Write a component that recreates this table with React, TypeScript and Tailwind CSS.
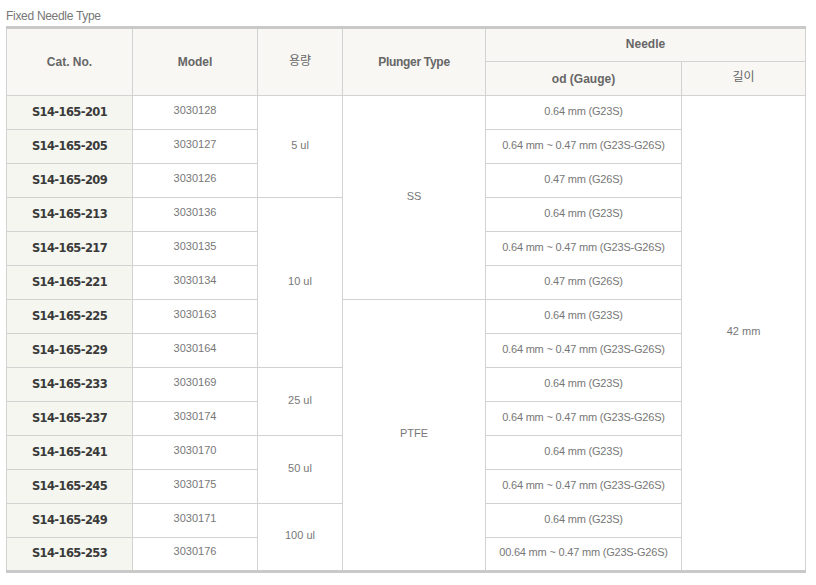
import React from "react";

type Row = {
  cat: string;
  model: string;
  od: string;
  vol?: { text: string; span: number };
  plunger?: { text: string; span: number };
};

const rows: Row[] = [
  { cat: "S14-165-201", model: "3030128", od: "0.64 mm (G23S)", vol: { text: "5 ul", span: 3 }, plunger: { text: "SS", span: 6 } },
  { cat: "S14-165-205", model: "3030127", od: "0.64 mm ~ 0.47 mm (G23S-G26S)" },
  { cat: "S14-165-209", model: "3030126", od: "0.47 mm (G26S)" },
  { cat: "S14-165-213", model: "3030136", od: "0.64 mm (G23S)", vol: { text: "10 ul", span: 5 } },
  { cat: "S14-165-217", model: "3030135", od: "0.64 mm ~ 0.47 mm (G23S-G26S)" },
  { cat: "S14-165-221", model: "3030134", od: "0.47 mm (G26S)" },
  { cat: "S14-165-225", model: "3030163", od: "0.64 mm (G23S)", plunger: { text: "PTFE", span: 8 } },
  { cat: "S14-165-229", model: "3030164", od: "0.64 mm ~ 0.47 mm (G23S-G26S)" },
  { cat: "S14-165-233", model: "3030169", od: "0.64 mm (G23S)", vol: { text: "25 ul", span: 2 } },
  { cat: "S14-165-237", model: "3030174", od: "0.64 mm ~ 0.47 mm (G23S-G26S)" },
  { cat: "S14-165-241", model: "3030170", od: "0.64 mm (G23S)", vol: { text: "50 ul", span: 2 } },
  { cat: "S14-165-245", model: "3030175", od: "0.64 mm ~ 0.47 mm (G23S-G26S)" },
  { cat: "S14-165-249", model: "3030171", od: "0.64 mm (G23S)", vol: { text: "100 ul", span: 2 } },
  { cat: "S14-165-253", model: "3030176", od: "00.64 mm ~ 0.47 mm (G23S-G26S)" },
];

const th = "border border-[#d2d2d2] bg-[#f9f7f3] text-[12px] font-bold text-[#666] text-center align-middle";
const td = "border border-[#d2d2d2] text-[11px] text-[#777] text-center align-middle pb-[3px]";

export default function App() {
  return (
    <div className="min-h-screen w-full bg-white font-['Liberation_Sans','Noto_Sans_CJK_KR',sans-serif]">
      <div className="px-[6px] pt-[9px]">
        <p className="text-[12px] leading-[15px] text-[#777] mb-[2px] tracking-[-0.3px]">Fixed Needle Type</p>
        <table className="w-[799px] border-collapse table-fixed border-t-[3px] border-t-[#c9c9c9] border-b-[3px] border-b-[#c9c9c9]">
          <colgroup>
            <col className="w-[126px]" />
            <col className="w-[125px]" />
            <col className="w-[85px]" />
            <col className="w-[143px]" />
            <col className="w-[196px]" />
            <col className="w-[124px]" />
          </colgroup>
          <thead>
            <tr className="h-[34px]">
              <th rowSpan={2} className={th}>Cat. No.</th>
              <th rowSpan={2} className={th}>Model</th>
              <th rowSpan={2} className={th + " font-['Noto_Sans_CJK_KR',sans-serif] font-normal pb-[4px]"}>용량</th>
              <th rowSpan={2} className={th + " tracking-[-0.3px]"}>Plunger Type</th>
              <th colSpan={2} className={th + " pb-[2px]"}>Needle</th>
            </tr>
            <tr className="h-[34px]">
              <th className={th}>od (Gauge)</th>
              <th className={th + " font-['Noto_Sans_CJK_KR',sans-serif] font-normal pb-[5px]"}>길이</th>
            </tr>
          </thead>
          <tbody>
            {rows.map((r, i) => (
              <tr key={r.cat} className="h-[34px]">
                <td className="border border-[#d2d2d2] bg-[#f4f6ef] text-center align-middle font-['DejaVu_Sans',sans-serif] font-bold text-[11.5px] tracking-[-0.6px] text-[#3a3a3a]">
                  {r.cat}
                </td>
                <td className={td + " pb-[5px]"}>{r.model}</td>
                {r.vol && (
                  <td rowSpan={r.vol.span} className={td}>{r.vol.text}</td>
                )}
                {r.plunger && (
                  <td rowSpan={r.plunger.span} className={td}>{r.plunger.text}</td>
                )}
                <td className={td + " tracking-[-0.2px]"}>{r.od}</td>
                {i === 0 && (
                  <td rowSpan={14} className={td}>42 mm</td>
                )}
              </tr>
            ))}
          </tbody>
        </table>
      </div>
    </div>
  );
}
